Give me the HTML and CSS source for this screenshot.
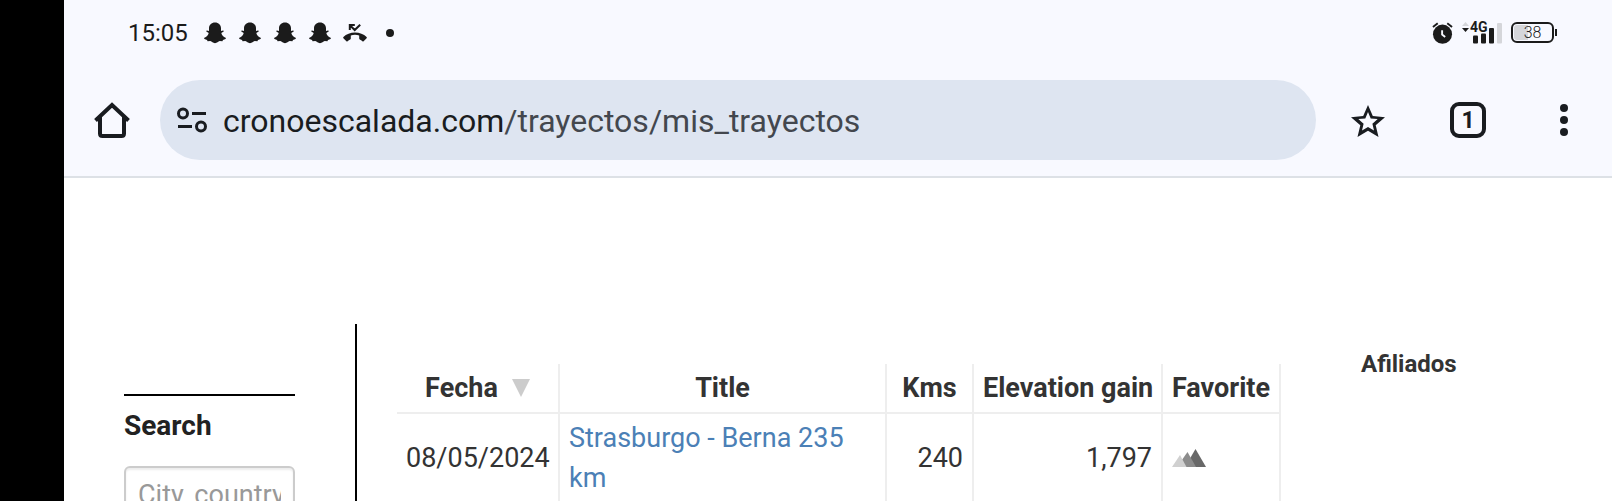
FILE: index.html
```html
<!DOCTYPE html>
<html lang="es">
<head>
<meta charset="utf-8">
<meta name="viewport" content="width=device-width, initial-scale=1">
<title>Mis trayectos</title>
<link rel="stylesheet" href="styles.css">
</head>
<body>
<svg class="defs" aria-hidden="true">
  <symbol id="ghost" viewBox="0 0 22 22">
    <path d="M11 0.5C14.6 0.5 17 3 17 6.2V9l2-.6c.9 0 1 .9.3 1.3L17.300 11c.7 2.600 2.200 4 4.300 4.800.5.3.4.9-.1 1.200l-2.500.9-.6 1.300-2.700-.1c-1.500.6-2.700 2.100-4.700 2.100s-3.200-1.500-4.700-2.100l-2.700.1-.6-1.300-2.500-.9c-.5-.3-.6-.9-.1-1.200C2.500 15 4 13.600 4.700 11L2.700 9.700C2 9.300 2.100 8.400 3 8.400L5 9V6.200C5 3 7.400 .5 11 .5Z"/>
  </symbol>
</svg>
<div class="device">
  <div class="cutout"></div>
  <div class="screen">
    <header class="status">
      <time class="clock">15:05</time>
      <div class="notices">
        <svg class="ghost"><use href="#ghost"/></svg>
        <svg class="ghost"><use href="#ghost"/></svg>
        <svg class="ghost"><use href="#ghost"/></svg>
        <svg class="ghost"><use href="#ghost"/></svg>
        <svg class="missed" viewBox="0 0 24 18" aria-label="Missed call"><path d="M12 8.600C7.500 8.600 3.300 10.300.4 13.100c-.4.400-.4.900 0 1.200l3 2.900c.3.300.8.300 1.200 0 .8-.7 1.600-1.200 2.600-1.600.4-.2.600-.5.600-1v-3.200c2.700-.8 5.700-.8 8.400 0v3.200c0 .5.200.8.600 1 1 .4 1.800.9 2.600 1.600.4.300.9.300 1.200 0l3-2.900c.4-.3.400-.8 0-1.200C20.700 10.300 16.500 8.600 12 8.600Z"/><path class="stroke" d="M6.800 6V1.100h5M7.200 1.500l4.500 4.500 5.500-5.300"/></svg>
        <span class="dot"></span>
      </div>
      <div class="system">
        <svg class="alarm" viewBox="0 0 22 22" aria-label="Alarm"><circle cx="11" cy="12.200" r="10"/><path class="stroke" d="M1 4.600 6 .7M16 .7l5 3.900"/><path class="hand" d="M10.600 8v4.600l3.200 2.500"/></svg>
        <svg class="signal" viewBox="0 0 40 22" aria-label="4G"><path class="faint" d="M0 4h7L3.500 0Z"/><path d="M0 6h7L3.500 10Z"/><text x="8" y="10">4G</text><rect x="11" y="13.500" width="5" height="8" rx="1"/><rect x="19" y="11.500" width="5" height="10" rx="1"/><rect x="27" y="6" width="5" height="15.500" rx="1"/><rect class="faint" x="35" y="1" width="5" height="20.500" rx="1"/></svg>
        <div class="battery"><span>38</span></div>
      </div>
    </header>
    <nav class="toolbar" aria-label="Browser">
      <button class="tool" aria-label="Home"><svg viewBox="0 0 48 48"><path class="line4" d="M7.500 24.500 24 9l16.500 15.500M12 21v16.500q0 2.500 2.500 2.500h19q2.500 0 2.500-2.500V21"/></svg></button>
      <div class="omnibox">
        <svg class="tune" viewBox="0 0 30 26" aria-hidden="true"><circle cx="6" cy="6.500" r="4.500"/><circle cx="24" cy="19.500" r="4.500"/><path d="M15 6.500h14M1 19.500h14"/></svg>
        <div class="url" role="textbox" aria-label="Address" contenteditable="true" spellcheck="false">cronoescalada.com<span class="path">/trayectos/mis_trayectos</span></div>
      </div>
      <div class="tools">
        <button class="tool star" aria-label="Bookmark"><svg viewBox="0 0 48 48"><path fill-rule="evenodd" d="M41 21.200l-12.200-1.100L24 9l-4.800 11.100L7 21.200l9.300 8L13.500 41 24 34.700 34.500 41l-2.800-11.800ZM24 31l-6 3.600 1.600-6.900-5.300-4.600 7-.6L24 16l2.700 6.500 7 .6-5.300 4.600 1.600 6.900Z"/></svg></button>
        <button class="tool" aria-label="Tabs"><span class="tabs">1</span></button>
        <button class="tool" aria-label="Menu"><svg viewBox="0 0 48 48"><circle cx="24" cy="12" r="4"/><circle cx="24" cy="24" r="4"/><circle cx="24" cy="36" r="4"/></svg></button>
      </div>
    </nav>
    <main class="page">
      <form class="filter">
        <div class="group">
          <label for="place">Search</label>
          <input id="place" type="text" placeholder="City, country">
        </div>
      </form>
      <section class="routes">
        <table>
          <thead>
            <tr><th class="date">Fecha<svg class="sort" viewBox="0 0 18 18" aria-hidden="true"><path d="M0 0h18L9 18Z"/></svg></th><th>Title</th><th class="kms">Kms</th><th class="gain">Elevation gain</th><th class="fav">Favorite</th></tr>
          </thead>
          <tbody>
            <tr><td>08/05/2024</td><td><a href="#strasburgo-berna">Strasburgo - Berna 235 km</a></td><td class="num">240</td><td class="num">1,797</td><td><svg class="peaks" viewBox="0 0 34 18" aria-label="Favorite"><path fill="#686868" d="M13 18 23.500 0 34 18Z"/><path fill="#8c8c8c" d="M5 18 15.500 3 24 18Z"/><path fill="#d0d0d0" d="M0 18 8 6l6.500 12Z"/></svg></td></tr>
          </tbody>
        </table>
      </section>
      <aside class="affiliates"><h2>Afiliados</h2></aside>
    </main>
  </div>
</div>
</body>
</html>
```
FILE: styles.css
```css
* { box-sizing: border-box; }
body {
  margin: 0;
  background: #fff;
  color: #333;
  font-family: Roboto, "Liberation Sans", sans-serif;
  font-size: 27px;
  line-height: 40px;
}
.defs { position: absolute; width: 0; height: 0; }
.device { display: flex; height: 100vh; overflow: hidden; }
.cutout { flex: none; width: 64px; background: #000; }
.screen { flex: 1; min-width: 0; display: flex; flex-direction: column; }

.status {
  display: flex;
  align-items: center;
  flex: none;
  height: 64px;
  padding: 1px 58px 0 64px;
  background: #f8f9ff;
  color: #1b1b1b;
  fill: #1b1b1b;
}
.clock { font-size: 24px; }
.notices { display: flex; align-items: center; gap: 13px; margin-left: 16px; }
.ghost { width: 22px; height: 22px; }
.missed { width: 24px; height: 18px; margin-left: -1px; }
.stroke { fill: none; stroke: #1b1b1b; stroke-width: 2; }
.dot { width: 8px; height: 8px; margin-left: 6px; border-radius: 50%; background: #1b1b1b; }
.system { display: flex; align-items: center; gap: 9px; margin-left: auto; }
.alarm { width: 21px; height: 22px; overflow: visible; }
.hand { fill: none; stroke: #f8f9ff; stroke-width: 2; }
.signal { width: 40px; height: 22px; font-size: 14px; font-weight: 700; overflow: visible; }
.faint { fill: #d5d6da; }
.battery {
  position: relative;
  width: 43px;
  height: 21px;
  border: 2px solid #1b1b1b;
  border-radius: 6px;
  background: linear-gradient(90deg, #d5d6da 38%, transparent 38%) content-box;
  padding: 1px;
  font-size: 16px;
  font-weight: 300;
  line-height: 16px;
  text-align: center;
}
.battery::after {
  content: "";
  position: absolute;
  top: 5px;
  right: -5px;
  width: 2px;
  height: 7px;
  background: #1b1b1b;
}

.toolbar {
  display: flex;
  flex: none;
  align-items: center;
  height: 114px;
  padding: 0 24px;
  border-bottom: 2px solid #dde1e6;
  background: #f8f9ff;
}
.tool {
  display: grid;
  place-items: center;
  width: 48px;
  height: 48px;
  padding: 0;
  border: 0;
  background: none;
  color: #191c20;
  fill: #191c20;
  font: inherit;
}
.tool svg { display: block; width: 48px; height: 48px; }
.line4 { fill: none; stroke: #191c20; stroke-width: 4; }
.omnibox {
  display: flex;
  flex: 1;
  min-width: 0;
  align-items: center;
  height: 80px;
  margin: 0 28px 0 24px;
  padding: 0 17px;
  border-radius: 40px;
  background: #dee5f1;
}
.tune { flex: none; width: 30px; height: 26px; margin-right: 16px; fill: none; stroke: #191c20; stroke-width: 3; }
.url { flex: 1; padding-top: 2px; color: #191c20; font-size: 32px; white-space: nowrap; outline: 0; }
.path { color: #43474e; }
.tools { display: flex; gap: 48px; }
.star { margin-right: 4px; }
.tabs {
  width: 36px;
  height: 36px;
  border: 4px solid #191c20;
  border-radius: 9px;
  font-size: 23px;
  font-weight: 700;
  line-height: 30px;
  text-align: center;
}

.page {
  display: grid;
  grid-template-columns: 293px 1fr 331px;
  flex: 1;
  padding-top: 146px;
}
.filter { padding: 70px 60px 0; border-right: 2px solid #000; }
.group { border-top: 2px solid #000; padding-top: 10px; }
.group label { display: block; margin-bottom: 20px; color: #222; font-size: 28px; font-weight: 700; }
.group input {
  display: block;
  width: 100%;
  height: 58px;
  padding: 0 12px;
  border: 2px solid #ccc;
  border-radius: 6px;
  box-shadow: inset 0 2px 2px rgba(0, 0, 0, 0.075);
  font: inherit;
}
.group input::placeholder { color: #999; }

.routes { padding: 40px 0 0 40px; }
table { width: 100%; table-layout: fixed; border-collapse: separate; border-spacing: 0; }
th, td { padding: 4px 9px; border-right: 2px solid #eee; text-align: left; }
th { border-bottom: 2px solid #eee; text-align: center; font-weight: 700; white-space: nowrap; }
.date { width: 163px; }
.kms { width: 87px; }
.gain { width: 189px; }
.fav { width: 118px; }
.num { text-align: right; }
.sort { width: 18px; height: 18px; margin-left: 14px; fill: #ccc; }
.peaks { display: block; width: 34px; height: 18px; }
a { color: #4b80b6; text-decoration: none; }

.affiliates { padding: 20px 0 0 80px; }
.affiliates h2 { margin: 0; font-size: 24px; }
```
